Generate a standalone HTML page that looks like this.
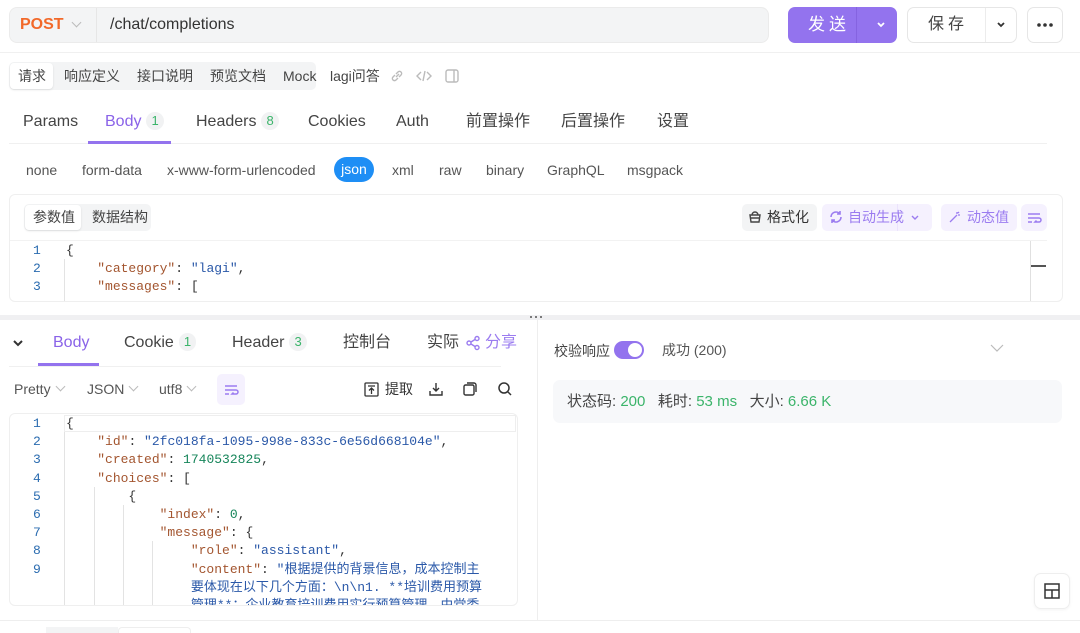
<!DOCTYPE html>
<html><head><meta charset="utf-8">
<style>
*{box-sizing:border-box;margin:0;padding:0}
body{width:1080px;height:633px;overflow:hidden;background:#fff;font-family:"Liberation Sans","Noto Sans CJK SC",sans-serif;color:#333;position:relative;font-size:14px}
.a{position:absolute;white-space:nowrap;line-height:20px}
.mono{font-family:"Liberation Mono","Noto Sans CJK SC",monospace;font-size:13px}
.k{color:#a3552f}.s{color:#2a58a8}.n{color:#16855a}.p{color:#333}
.ln{color:#2b6cb0;font-family:"Liberation Mono",monospace;font-size:13px}
.badge{display:inline-block;background:#f1f2f3;border-radius:9px;color:#3bb46a;font-size:13px;padding:0 5px;line-height:18px;margin-left:5px;vertical-align:1px}
.chev{display:inline-block;width:7px;height:7px;border-right:1px solid #bbb;border-bottom:1px solid #bbb;transform:rotate(45deg);margin-left:6px;position:relative;top:-4px}
.vl{position:absolute;width:1px;background:#e2e2e2}
</style></head><body>

<!-- top bar -->
<div class="a" style="left:9px;top:7px;width:760px;height:36px;background:#f3f4f5;border-radius:8px;border:1px solid #ebebeb"></div>
<div class="a" style="left:20px;top:15px;color:#f2692a;font-weight:bold;font-size:16px">POST</div>
<div class="a" style="left:67px;top:15px"><span class="chev" style="border-color:#bbb"></span></div>
<div class="vl" style="left:96px;top:8px;height:34px;background:#e6e6e6"></div>
<div class="a" style="left:110px;top:15px;font-size:16px;color:#333">/chat/completions</div>

<div class="a" style="left:788px;top:7px;width:109px;height:36px;background:#9373ee;border-radius:7px"></div>
<div class="a" style="left:808px;top:15px;color:#fff;font-size:17px;letter-spacing:4px">发送</div>
<div class="vl" style="left:856px;top:7px;height:36px;background:#8563e0"></div>
<svg class="a" style="left:876px;top:21px" width="10" height="7" viewBox="0 0 10 7" fill="none" stroke="#fff" stroke-width="1.8"><path d="M2 2l3 3 3-3"/></svg>

<div class="a" style="left:907px;top:7px;width:110px;height:36px;border:1px solid #e6e6e6;border-radius:7px"></div>
<div class="a" style="left:928px;top:15px;color:#444;font-size:16px;letter-spacing:4px">保存</div>
<div class="vl" style="left:985px;top:8px;height:34px;background:#ececec"></div>
<svg class="a" style="left:996px;top:21px" width="10" height="7" viewBox="0 0 10 7" fill="none" stroke="#333" stroke-width="1.8"><path d="M2 2l3 3 3-3"/></svg>
<div class="a" style="left:1027px;top:7px;width:36px;height:36px;border:1px solid #e6e6e6;border-radius:7px"></div>
<svg class="a" style="left:1036px;top:22px" width="18" height="6" viewBox="0 0 18 6" fill="#333"><circle cx="3" cy="3" r="1.8"/><circle cx="9" cy="3" r="1.8"/><circle cx="15" cy="3" r="1.8"/></svg>
<div class="a" style="left:0;top:52px;width:1080px;height:1px;background:#f0f0f0"></div>

<!-- row 2 -->
<div class="a" style="left:9px;top:62px;width:307px;height:28px;background:#f3f4f5;border-radius:5px"></div>
<div class="a" style="left:10px;top:63px;width:43px;height:26px;background:#fff;border-radius:4px;box-shadow:0 1px 2px rgba(0,0,0,.1)"></div>
<div class="a" style="left:18px;top:66px;color:#444">请求</div>
<div class="a" style="left:64px;top:66px;color:#444">响应定义</div>
<div class="a" style="left:137px;top:66px;color:#444">接口说明</div>
<div class="a" style="left:210px;top:66px;color:#444">预览文档</div>
<div class="a" style="left:283px;top:66px;color:#444">Mock</div>
<div class="a" style="left:330px;top:66px;color:#444">lagi问答</div>
<svg class="a" style="left:389px;top:68px" width="16" height="16" viewBox="0 0 16 16" fill="none" stroke="#bbb" stroke-width="1.4"><path d="M7 9l3-3M6 7L4 9a2 2 0 003 3l2-2M10 9l2-2a2 2 0 00-3-3L7 6"/></svg>
<svg class="a" style="left:416px;top:68px" width="16" height="16" viewBox="0 0 16 16" fill="none" stroke="#bbb" stroke-width="1.4"><path d="M5 4L1 8l4 4M11 4l4 4-4 4M9 3L7 13"/></svg>
<svg class="a" style="left:444px;top:68px" width="16" height="16" viewBox="0 0 16 16" fill="none" stroke="#bbb" stroke-width="1.4"><rect x="2" y="2" width="12" height="12" rx="2"/><path d="M10 2v12"/></svg>

<!-- tab row -->
<div class="a" style="left:23px;top:112px;font-size:16px;color:#444">Params</div>
<div class="a" style="left:105px;top:112px;font-size:16px;color:#8a63e8">Body<span class="badge" style="color:#3bb46a">1</span></div>
<div class="a" style="left:196px;top:112px;font-size:16px;color:#444">Headers<span class="badge">8</span></div>
<div class="a" style="left:308px;top:112px;font-size:16px;color:#444">Cookies</div>
<div class="a" style="left:396px;top:112px;font-size:16px;color:#444">Auth</div>
<div class="a" style="left:466px;top:112px;font-size:16px;color:#444">前置操作</div>
<div class="a" style="left:561px;top:112px;font-size:16px;color:#444">后置操作</div>
<div class="a" style="left:657px;top:112px;font-size:16px;color:#444">设置</div>
<div class="a" style="left:9px;top:143px;width:1038px;height:1px;background:#f0f0f0"></div>
<div class="a" style="left:88px;top:141px;width:83px;height:3px;background:#9373ee"></div>

<!-- body types -->
<div class="a" style="left:26px;top:160px;color:#555">none</div>
<div class="a" style="left:82px;top:160px;color:#555">form-data</div>
<div class="a" style="left:167px;top:160px;color:#555">x-www-form-urlencoded</div>
<div class="a" style="left:334px;top:157px;width:40px;height:25px;background:#1e8ef5;border-radius:13px;color:#fff;text-align:center;line-height:25px">json</div>
<div class="a" style="left:392px;top:160px;color:#555">xml</div>
<div class="a" style="left:439px;top:160px;color:#555">raw</div>
<div class="a" style="left:486px;top:160px;color:#555">binary</div>
<div class="a" style="left:547px;top:160px;color:#555">GraphQL</div>
<div class="a" style="left:627px;top:160px;color:#555">msgpack</div>

<!-- editor box -->
<div class="a" style="left:9px;top:194px;width:1054px;height:108px;border:1px solid #efefef;border-radius:6px"></div>
<div class="a" style="left:24px;top:204px;width:127px;height:27px;background:#f3f4f5;border-radius:5px"></div>
<div class="a" style="left:25px;top:205px;width:56px;height:25px;background:#fff;border-radius:4px;box-shadow:0 1px 2px rgba(0,0,0,.1)"></div>
<div class="a" style="left:33px;top:207px;color:#444">参数值</div>
<div class="a" style="left:92px;top:207px;color:#444">数据结构</div>
<div class="a" style="left:742px;top:204px;width:75px;height:27px;background:#f3f4f5;border-radius:5px"></div>
<svg class="a" style="left:748px;top:210px" width="14" height="14" viewBox="0 0 14 14" fill="none" stroke="#444" stroke-width="1.4"><path d="M2 5h10l-1 7H3zM4 5a3 3 0 016 0M2 8h10"/></svg>
<div class="a" style="left:767px;top:207px;color:#333">格式化</div>
<div class="a" style="left:822px;top:204px;width:110px;height:27px;background:#f5f1fe;border-radius:5px"></div>
<div class="vl" style="left:897px;top:204px;height:27px;background:#ebe3fc"></div>
<svg class="a" style="left:829px;top:210px" width="14" height="14" viewBox="0 0 14 14" fill="none" stroke="#9b7cf0" stroke-width="1.6"><path d="M2 7a5 5 0 019-3M12 7a5 5 0 01-9 3M11 1v3H8M3 13v-3h3"/></svg>
<div class="a" style="left:848px;top:207px;color:#9b7cf0">自动生成</div>
<svg class="a" style="left:910px;top:214px" width="10" height="7" viewBox="0 0 10 7" fill="none" stroke="#9b7cf0" stroke-width="1.4"><path d="M2 2l3 3 3-3"/></svg>
<div class="a" style="left:941px;top:204px;width:76px;height:27px;background:#f5f1fe;border-radius:5px"></div>
<svg class="a" style="left:948px;top:210px" width="14" height="14" viewBox="0 0 14 14" fill="none" stroke="#9b7cf0" stroke-width="1.3"><path d="M2 12l7-7M9 2v2M12 5h-2M11 2l-1 1"/></svg>
<div class="a" style="left:967px;top:207px;color:#9b7cf0">动态值</div>
<div class="a" style="left:1021px;top:204px;width:26px;height:27px;background:#f5f1fe;border-radius:6px"></div>
<svg class="a" style="left:1026px;top:210px" width="16" height="16" viewBox="0 0 16 16" fill="none" stroke="#9b7cf0" stroke-width="1.5"><path d="M2 4h12M2 8h11a2 2 0 010 4H9l1.5-1.5M2 12h4"/></svg>
<div class="a" style="left:10px;top:240px;width:1037px;height:1px;background:#f2f2f2"></div>
<div class="vl" style="left:1030px;top:241px;height:60px;background:#e0e0e0"></div>
<div class="a" style="left:1031px;top:265px;width:15px;height:2px;background:#555"></div>
<div class="vl" style="left:64px;top:259px;height:42px;background:#e3e3e3"></div>
<div class="a ln" style="left:33px;top:242px;line-height:18px">1<br>2<br>3</div>
<div class="a mono" style="left:66px;top:242px;line-height:18px"><span class="p">{</span><br>&nbsp;&nbsp;&nbsp;&nbsp;<span class="k">"category"</span>: <span class="s">"lagi"</span>,<br>&nbsp;&nbsp;&nbsp;&nbsp;<span class="k">"messages"</span>: [</div>

<!-- splitter -->
<div class="a" style="left:0;top:315px;width:1080px;height:5px;background:#f0f0f2"></div>
<svg class="a" style="left:529px;top:315px" width="14" height="4" viewBox="0 0 14 4" fill="#555"><circle cx="2" cy="2" r="1"/><circle cx="7" cy="2" r="1"/><circle cx="12" cy="2" r="1"/></svg>
<div class="vl" style="left:537px;top:320px;height:300px;background:#eee"></div>

<!-- bottom left -->
<svg class="a" style="left:12px;top:339px" width="12" height="8" viewBox="0 0 12 8" fill="none" stroke="#333" stroke-width="2"><path d="M2 2l4 4 4-4"/></svg>
<div class="a" style="left:53px;top:333px;font-size:16px;color:#8a63e8">Body</div>
<div class="a" style="left:38px;top:363px;width:61px;height:3px;background:#9373ee"></div>
<div class="a" style="left:124px;top:333px;font-size:16px;color:#444">Cookie<span class="badge">1</span></div>
<div class="a" style="left:232px;top:333px;font-size:16px;color:#444">Header<span class="badge">3</span></div>
<div class="a" style="left:343px;top:333px;font-size:16px;color:#444">控制台</div>
<div class="a" style="left:427px;top:333px;font-size:16px;color:#444">实际</div>
<svg class="a" style="left:465px;top:335px" width="16" height="16" viewBox="0 0 16 16" fill="none" stroke="#9b7cf0" stroke-width="1.4"><circle cx="4" cy="8" r="2"/><circle cx="12" cy="3.5" r="2"/><circle cx="12" cy="12.5" r="2"/><path d="M6 7l4-2.5M6 9l4 2.5"/></svg>
<div class="a" style="left:485px;top:333px;font-size:16px;color:#9b7cf0">分享</div>
<div class="a" style="left:9px;top:366px;width:492px;height:1px;background:#f0f0f0"></div>

<div class="a" style="left:14px;top:379px;color:#555">Pretty<span class="chev"></span></div>
<div class="a" style="left:87px;top:379px;color:#555">JSON<span class="chev"></span></div>
<div class="a" style="left:159px;top:379px;color:#555">utf8<span class="chev"></span></div>
<div class="a" style="left:217px;top:374px;width:28px;height:31px;background:#f5f1fe;border-radius:5px"></div>
<svg class="a" style="left:223px;top:382px" width="16" height="16" viewBox="0 0 16 16" fill="none" stroke="#9b7cf0" stroke-width="1.5"><path d="M2 4h12M2 8h11a2 2 0 010 4H9l1.5-1.5M2 12h4"/></svg>
<svg class="a" style="left:364px;top:382px" width="15" height="15" viewBox="0 0 15 15" fill="none" stroke="#333" stroke-width="1.3"><rect x="1" y="1" width="13" height="13" rx="1"/><path d="M4 4h7M7.5 12V6M5 8.5l2.5-2.5 2.5 2.5"/></svg>
<div class="a" style="left:385px;top:379px;color:#333">提取</div>
<svg class="a" style="left:428px;top:381px" width="16" height="16" viewBox="0 0 16 16" fill="none" stroke="#333" stroke-width="1.4"><path d="M8 2v8M5 7l3 3 3-3M2 10v4h12v-4"/></svg>
<svg class="a" style="left:462px;top:381px" width="16" height="16" viewBox="0 0 16 16" fill="none" stroke="#333" stroke-width="1.4"><rect x="2" y="4" width="10" height="10" rx="1.5"/><path d="M5 2h7a2 2 0 012 2v7"/></svg>
<svg class="a" style="left:497px;top:381px" width="16" height="16" viewBox="0 0 16 16" fill="none" stroke="#333" stroke-width="1.5"><circle cx="7" cy="7" r="5"/><path d="M11 11l3 3"/></svg>

<!-- response code -->
<div class="a" style="left:9px;top:413px;width:509px;height:193px;border:1px solid #efefef;border-radius:6px;overflow:hidden"></div>
<div class="a" style="left:64px;top:415px;width:452px;height:17px;border:1px solid #eee"></div>
<div class="vl" style="left:64px;top:432px;height:173px;background:#e3e3e3"></div>
<div class="vl" style="left:94px;top:487px;height:118px;background:#e3e3e3"></div>
<div class="vl" style="left:123px;top:505px;height:100px;background:#e3e3e3"></div>
<div class="vl" style="left:152px;top:541px;height:64px;background:#e3e3e3"></div>
<div class="a ln" style="left:33px;top:415px;line-height:18.2px">1<br>2<br>3<br>4<br>5<br>6<br>7<br>8<br>9</div>
<div class="a" style="left:66px;top:415px;width:440px;height:190px;overflow:hidden">
<div class="mono" style="line-height:18.2px;white-space:pre"><span class="p">{</span>
    <span class="k">"id"</span>: <span class="s">"2fc018fa-1095-998e-833c-6e56d668104e"</span>,
    <span class="k">"created"</span>: <span class="n">1740532825</span>,
    <span class="k">"choices"</span>: [
        {
            <span class="k">"index"</span>: <span class="n">0</span>,
            <span class="k">"message"</span>: {
                <span class="k">"role"</span>: <span class="s">"assistant"</span>,
                <span class="k">"content"</span>: <span class="s">"根据提供的背景信息，成本控制主</span>
<span class="s">                要体现在以下几个方面：\n\n1. **培训费用预算</span>
<span class="s">                管理**：企业教育培训费用实行预算管理，由党委</span></div></div>

<!-- right pane -->
<div class="a" style="left:554px;top:341px;color:#444">校验响应</div>
<div class="a" style="left:614px;top:341px;width:30px;height:18px;background:#9373ee;border-radius:9px"></div>
<div class="a" style="left:628px;top:343px;width:14px;height:14px;background:#fff;border-radius:50%"></div>
<div class="a" style="left:662px;top:340px;color:#555">成功 (200)</div>
<svg class="a" style="left:990px;top:344px" width="14" height="9" viewBox="0 0 14 9" fill="none" stroke="#bbb" stroke-width="1.2"><path d="M1 1l6 6 6-6"/></svg>
<div class="a" style="left:553px;top:380px;width:509px;height:43px;background:#f7f8fa;border-radius:7px"></div>
<div class="a" style="left:567px;top:392px;font-size:15px;color:#444">状态码: <span style="color:#3bb46a">200</span>&nbsp;&nbsp;&nbsp;耗时: <span style="color:#3bb46a">53 ms</span>&nbsp;&nbsp;&nbsp;大小: <span style="color:#3bb46a">6.66 K</span></div>
<div class="a" style="left:1034px;top:573px;width:36px;height:36px;border:1px solid #eee;border-radius:7px;box-shadow:0 1px 3px rgba(0,0,0,.05)"></div>
<svg class="a" style="left:1044px;top:583px" width="16" height="16" viewBox="0 0 16 16" fill="none" stroke="#333" stroke-width="1.5"><rect x="1" y="1" width="14" height="14"/><path d="M1 7h14M8 7v8"/></svg>

<div class="a" style="left:0;top:620px;width:1080px;height:1px;background:#eee"></div>
<div class="a" style="left:46px;top:627px;width:72px;height:6px;background:#f3f4f5"></div>
<div class="a" style="left:118px;top:627px;width:73px;height:6px;border:1px solid #eee;border-bottom:none;border-radius:4px 4px 0 0"></div>
</body></html>
